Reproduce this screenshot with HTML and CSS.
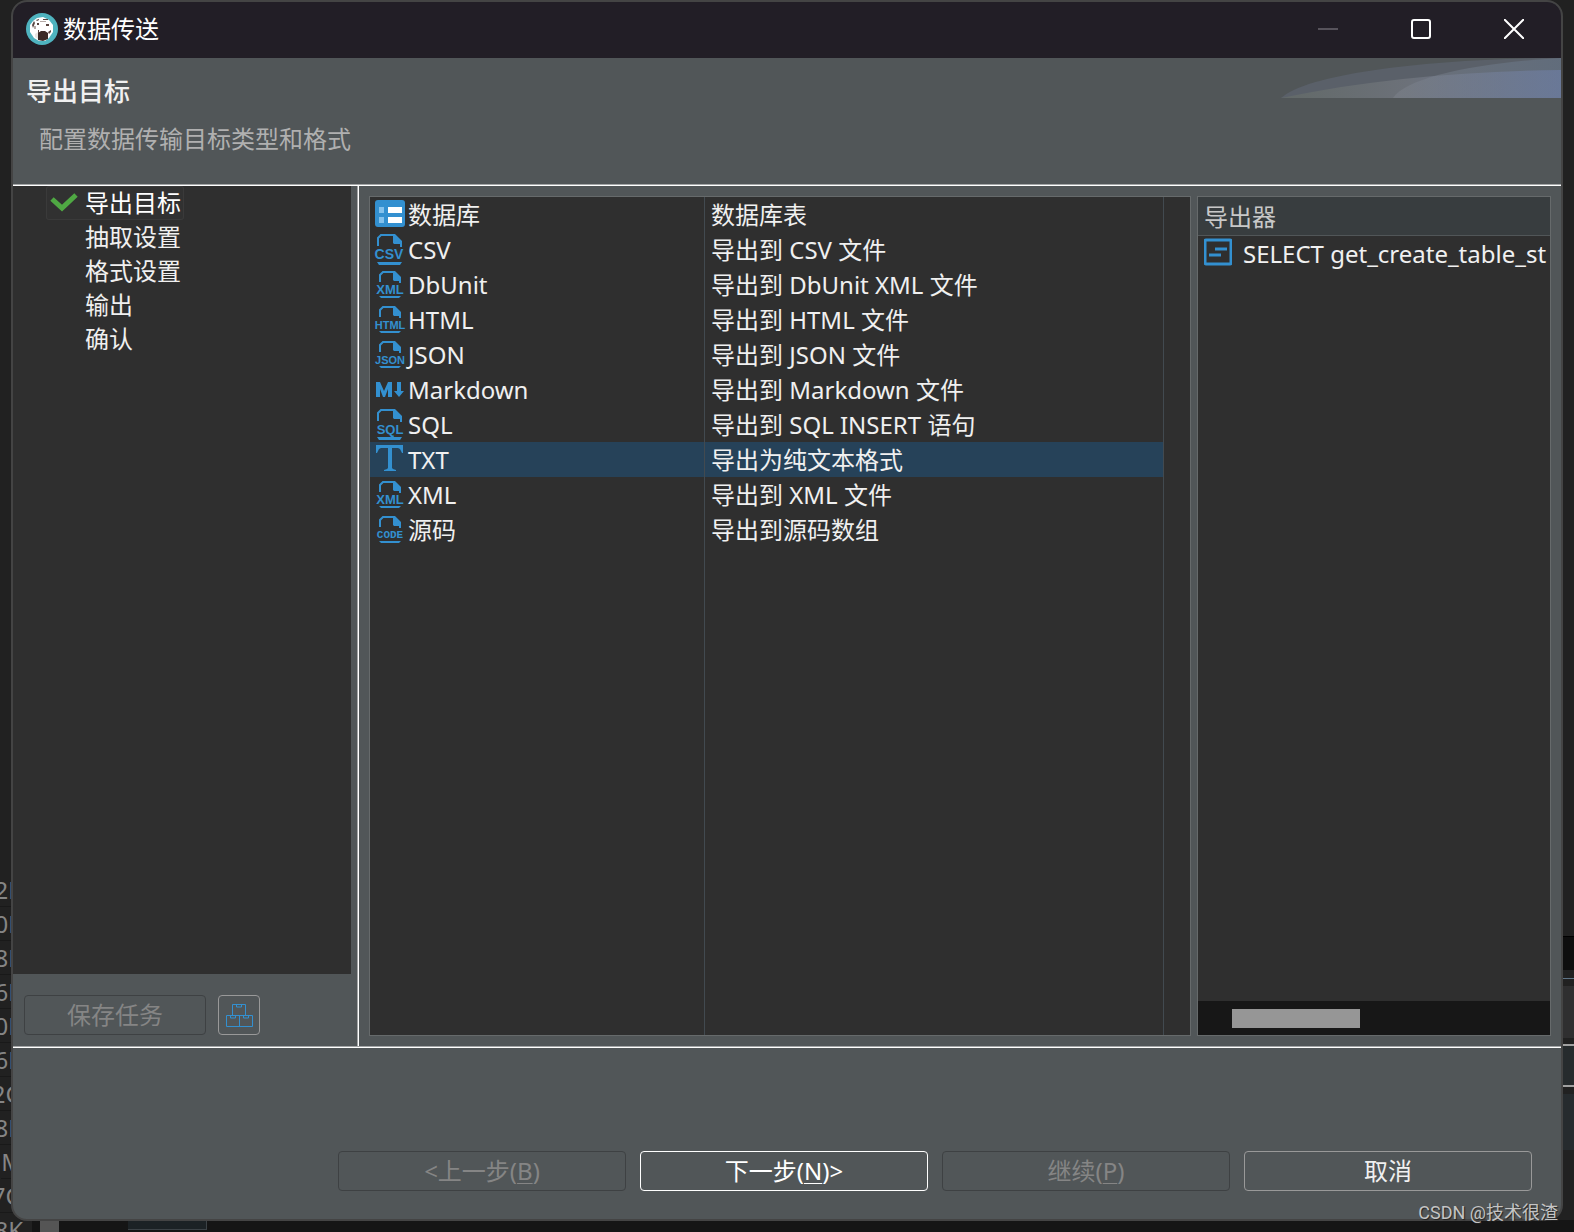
FILE: index.html
```html
<!DOCTYPE html>
<html lang="zh-CN">
<head>
<meta charset="utf-8">
<meta name="viewport" content="width=device-width, initial-scale=1">
<title>数据传送</title>
<link rel="stylesheet" href="styles.css">
</head>
<body>
<div class="backdrop" aria-hidden="true">
  <div class="backdrop-sizes">
    <span>2K</span><span>0K</span><span>8K</span><span>6K</span><span>0K</span><span>6K</span><span>2G</span><span>8K</span><span>M</span><span>7G</span><span>8K</span>
  </div>
  <div class="backdrop-side">
    <i class="side-dark"></i><i class="side-blue"></i><i class="side-tab"></i><i class="side-field"></i><i class="side-block"></i>
  </div>
  <div class="backdrop-bottom"><i class="bottom-thumb"></i><i class="bottom-cell"></i></div>
</div>

<svg class="defs" aria-hidden="true">
  <symbol id="doc" viewBox="0 0 31 35">
    <path d="M5 15V8L8 5H20M25 11V16" fill="none" stroke="#3390d0" stroke-width="2"/>
    <path d="M18 4h2l6 6v4h-7l-1-1z" fill="#3390d0"/>
    <path d="M4 29h22l-2 2H6z" fill="#3390d0"/>
  </symbol>
  <symbol id="doc-large" viewBox="0 0 31 35">
    <path d="M3 14V6L6 3H20M26 10V15" fill="none" stroke="#3390d0" stroke-width="2"/>
    <path d="M18 2h2l7 7v3h-8l-1-1z" fill="#3390d0"/>
    <path d="M2 30h25l-2 3H4z" fill="#3390d0"/>
  </symbol>
</svg>

<main class="window">
  <header class="titlebar">
    <svg class="logo" viewBox="0 0 32 32">
      <circle cx="16" cy="16" r="16" fill="#4fb3bf"/>
      <path d="M7 8l4-3 6-1 6 3 4 5v7l-4 6-4 3h-6l-5-3-4-6V12z" fill="#fff"/>
      <path d="M12 20l3-2h4l3 2v6l-5 2-5-1z" fill="#3b2a27"/>
      <path d="M6 12l2-4 1 2-2 5zM10 7l3-1v1l-2 1zM17 6h5v1h-5zM11 10h2v2h-2zM20 11h3v2h-3zM22 19l3-2v2l-2 2zM12 17h1v3h-1z" fill="#57433f"/>
      <path d="M9 21l3-2v7l-3-2z" fill="#e8e4e2"/>
      <path d="M8 13h2v3H8zM14 8h6v1h-6z" fill="#b5aaa6"/>
    </svg>
    <span class="window-title">数据传送</span>
    <div class="window-controls">
      <button type="button" disabled aria-label="最小化"><svg viewBox="0 0 20 20"><path d="M0 10h20" stroke="#57535b" stroke-width="2"/></svg></button>
      <button type="button" aria-label="最大化"><svg viewBox="0 0 20 20"><rect x="1" y="1" width="18" height="18" rx="2" fill="none" stroke="#fff" stroke-width="2"/></svg></button>
      <button type="button" aria-label="关闭"><svg viewBox="0 0 20 20"><path d="M0 0l20 20M20 0L0 20" stroke="#fff" stroke-width="2"/></svg></button>
    </div>
  </header>

  <section class="banner">
    <div>
      <h1>导出目标</h1>
      <p>配置数据传输目标类型和格式</p>
    </div>
    <svg class="swoosh" viewBox="0 0 280 40">
      <defs>
        <linearGradient id="low" x1="0" x2="1"><stop offset="0" stop-color="#626968"/><stop offset=".45" stop-color="#6c7179"/><stop offset="1" stop-color="#69759b"/></linearGradient>
        <linearGradient id="high" x1="0" x2="1"><stop offset="0" stop-color="#80858e"/><stop offset="1" stop-color="#6a7c92"/></linearGradient>
      </defs>
      <path d="M0 40C28 14 160 0 280 0V40z" fill="#5a6069"/>
      <path d="M0 40C90 21 190 13 280 12V40z" fill="url(#low)"/>
      <path d="M112 40C125 19 200 4 280 0V40z" fill="url(#high)" opacity=".45"/>
    </svg>
  </section>

  <div class="content">
    <aside class="sidebar">
      <nav class="steps" aria-label="步骤">
        <a class="step current" href="#target"><svg viewBox="0 0 28 20"><path d="M2 6l10 9L26 2" fill="none" stroke="#4fa843" stroke-width="5"/></svg><span>导出目标</span></a>
        <a class="step" href="#extract"><span>抽取设置</span></a>
        <a class="step" href="#format"><span>格式设置</span></a>
        <a class="step" href="#output"><span>输出</span></a>
        <a class="step" href="#confirm"><span>确认</span></a>
      </nav>
      <div class="task-bar">
        <button class="btn save" type="button" disabled>保存任务</button>
        <button class="btn icon-btn" type="button" aria-label="任务">
          <svg viewBox="0 0 28 24"><path d="M7.500 12V1.500h13V12M1.500 12.500h26v11h-26zM14.500 12.500v11M11.500 2v2h5V2M5.500 13v2h5v-2M18.500 13v2h5v-2" fill="none" stroke="#3390d0" stroke-width="1"/></svg>
        </button>
      </div>
    </aside>

    <div class="panels">
      <div class="panel">
        <table class="targets">
          <colgroup><col class="col-name"><col class="col-desc"><col></colgroup>
          <tbody>
            <tr><td><div class="name"><svg viewBox="0 0 31 35"><rect x="0" y="3" width="30" height="27" rx="3" fill="#3390d0"/><path d="M4 10h5v6H4zM4 20h5v6H4z" fill="#85c2ec"/><path d="M13 10h14v6H13zM13 20h14v6H13z" fill="#fff"/></svg>数据库</div></td><td>数据库表</td><td></td></tr>
            <tr><td><div class="name"><svg viewBox="0 0 31 35"><use href="#doc-large"/><text x="14" y="27" font-size="14">CSV</text></svg>CSV</div></td><td>导出到 CSV 文件</td><td></td></tr>
            <tr><td><div class="name"><svg viewBox="0 0 31 35"><use href="#doc"/><text x="15" y="27" font-size="13">XML</text></svg>DbUnit</div></td><td>导出到 DbUnit XML 文件</td><td></td></tr>
            <tr><td><div class="name"><svg viewBox="0 0 31 35"><use href="#doc"/><text x="15" y="27" font-size="11">HTML</text></svg>HTML</div></td><td>导出到 HTML 文件</td><td></td></tr>
            <tr><td><div class="name"><svg viewBox="0 0 31 35"><use href="#doc"/><text x="15" y="27" font-size="11">JSON</text></svg>JSON</div></td><td>导出到 JSON 文件</td><td></td></tr>
            <tr><td><div class="name"><svg viewBox="0 0 31 35"><path d="M1 25V10h4l4 9 4-9h4v15h-4v-8l-3 8H8l-3-8v8zM22 10h4v9h3l-5 6-5-6h3z" fill="#3390d0"/></svg>Markdown</div></td><td>导出到 Markdown 文件</td><td></td></tr>
            <tr><td><div class="name"><svg viewBox="0 0 31 35"><use href="#doc-large"/><text x="15" y="27" font-size="13">SQL</text></svg>SQL</div></td><td>导出到 SQL INSERT 语句</td><td></td></tr>
            <tr class="selected"><td><div class="name"><svg viewBox="0 0 31 35"><path d="M1 3h27v8h-1l-2-4-2-1h-6v20l1 1 3 1v1H9v-1l3-1 1-1V6H6L4 7l-2 4H1z" fill="#3390d0"/></svg>TXT</div></td><td>导出为纯文本格式</td><td></td></tr>
            <tr><td><div class="name"><svg viewBox="0 0 31 35"><use href="#doc"/><text x="15" y="27" font-size="13">XML</text></svg>XML</div></td><td>导出到 XML 文件</td><td></td></tr>
            <tr><td><div class="name"><svg viewBox="0 0 31 35"><use href="#doc"/><text class="mono" x="15" y="26" font-size="11">CODE</text></svg>源码</div></td><td>导出到源码数组</td><td></td></tr>
            <tr class="filler"><td></td><td></td><td></td></tr>
          </tbody>
        </table>
      </div>

      <div class="panel exporters">
        <table class="objects">
          <thead><tr><th scope="col">导出器</th></tr></thead>
          <tbody><tr><td><div class="object"><svg viewBox="0 0 28 28"><rect x="1" y="2" width="26" height="24" rx="1" fill="none" stroke="#3390d0" stroke-width="3"/><path d="M11 11h12M5 17h12" stroke="#3390d0" stroke-width="3"/></svg>SELECT get_create_table_st</div></td></tr></tbody>
        </table>
        <div class="scrollbar"><div class="thumb"></div></div>
      </div>
    </div>
  </div>

  <footer class="actions">
    <button class="btn" type="button" disabled>&lt;上一步(<u>B</u>)</button>
    <button class="btn primary" type="button">下一步(<u>N</u>)&gt;</button>
    <button class="btn" type="button" disabled>继续(<u>P</u>)</button>
    <button class="btn" type="button">取消</button>
  </footer>
</main>
<div class="watermark">CSDN @技术很渣</div>
</body>
</html>
```
FILE: styles.css
```css
* { box-sizing: border-box; }

body {
  margin: 0;
  height: 100vh;
  min-height: 720px;
  position: relative;
  overflow: hidden;
  background: #212121;
  color: #f0f0f0;
  font: 24px/34px "Noto Sans", "Noto Sans CJK SC", sans-serif;
}

button { font: inherit; color: inherit; }
svg { display: block; flex: none; }
.defs { position: absolute; width: 0; height: 0; }

/* Application behind the dialog */
.backdrop { position: absolute; inset: 0; overflow: hidden; }

.backdrop-sizes {
  position: absolute;
  left: 0;
  bottom: -15px;
  width: 23px;
  display: flex;
  flex-direction: column;
  align-items: flex-end;
  color: #858585;
}
.backdrop-sizes span { line-height: 33px; border-bottom: 1px solid #191919; }

.backdrop-side {
  position: absolute;
  right: 0;
  bottom: 82px;
  width: 14px;
  display: flex;
  flex-direction: column;
}
.side-dark { height: 34px; background: #0e0e0e; border-top: 1px solid #000; }
.side-blue { height: 1px; margin: 8px 0 7px; background: #5f7486; }
.side-tab { height: 52px; margin-bottom: 6px; background: #2f2f30; }
.side-field { height: 43px; margin-bottom: 7px; background: #262b2d; border: solid #a0a0a0; border-width: 2px 0; }
.side-block { height: 56px; background: #262b2e; }

.backdrop-bottom {
  position: absolute;
  left: 32px;
  right: 0;
  bottom: 0;
  height: 12px;
  display: flex;
  background: #151515;
}
.bottom-thumb { width: 19px; margin-left: 8px; background: #555; }
.bottom-cell { width: 79px; height: 10px; margin-left: 69px; background: #1c2225; border: solid #3c4246; border-width: 0 1px 1px 0; }

/* Dialog */
.window {
  position: relative;
  display: flex;
  flex-direction: column;
  height: calc(100% - 11px);
  margin: 0 11px;
  border: 2px solid #444;
  border-radius: 16px;
  overflow: hidden;
  background: #515658;
}

.titlebar {
  display: flex;
  align-items: center;
  height: 56px;
  flex: none;
  padding: 0 1px 2px 13px;
  background: #221e26;
}
.logo { width: 32px; height: 32px; }
.window-title { margin-left: 5px; color: #fff; }
.window-controls { display: flex; margin-left: auto; }
.window-controls button {
  display: grid;
  place-items: center;
  width: 93px;
  height: 54px;
  padding: 0;
  border: 0;
  background: none;
}
.window-controls svg { width: 20px; height: 20px; }

.banner {
  display: flex;
  justify-content: space-between;
  flex: none;
  height: 128px;
  border-bottom: 1px solid #fff;
  box-shadow: inset 0 -1px #a3a5a6;
}
.banner h1 { margin: 16px 0 0 13px; font-size: 26px; font-weight: 500; line-height: 34px; }
.banner p { margin: 14px 0 0 26px; color: #b0b0b0; }
.swoosh { width: 280px; height: 40px; }

.content { display: flex; flex: 1; min-height: 0; }

.sidebar {
  display: flex;
  flex-direction: column;
  flex: none;
  width: 346px;
  border-right: 1px solid #fff;
  box-shadow: inset -1px 0 #a3a5a6;
}
.steps {
  display: flex;
  flex-direction: column;
  align-items: flex-start;
  flex: 1;
  margin-right: 7px;
  padding-left: 33px;
  background: #2f2f2f;
}
.step {
  display: flex;
  align-items: center;
  height: 34px;
  padding: 0 3px 0 39px;
  color: inherit;
  text-decoration: none;
}
.step.current { padding-left: 4px; box-shadow: inset 0 0 0 1px #3a3a3a; border-radius: 3px; color: #fff; background: #313131; }
.step svg { width: 28px; height: 20px; margin-right: 7px; }

.task-bar { display: flex; gap: 12px; padding: 21px 11px 12px; }

.btn {
  height: 40px;
  padding: 0;
  border: 1px solid #999;
  border-radius: 4px;
  background: #515658;
  line-height: 34px;
}
.btn:disabled { border-color: #3e4143; color: #858585; }
.btn.primary { border-color: #fff; color: #fff; }
.btn u { text-decoration-thickness: 1px; text-underline-offset: 3px; }
.save { width: 182px; }
.icon-btn { display: grid; place-items: center; width: 42px; }
.icon-btn svg { width: 28px; height: 24px; }

.panels {
  display: grid;
  grid-template-columns: minmax(0, 822fr) minmax(0, 354fr);
  gap: 6px;
  flex: 1;
  min-width: 0;
  padding: 10px 10px 11px;
}
.panel { border: 1px solid #666a6b; background: #2f2f2f; min-height: 0; overflow: hidden; }

.targets { width: 100%; height: 100%; border-collapse: separate; border-spacing: 0; table-layout: fixed; }
.col-name { width: 334px; }
.col-desc { width: 56%; }
.targets td { height: 35px; padding: 0; line-height: 35px; white-space: nowrap; }
.targets td + td { padding-left: 6px; border-left: 1px solid #424a50; }
.targets .filler td { height: auto; }
.targets .selected td:not(:last-child) { background: #264259; }
.name { display: flex; align-items: center; height: 35px; padding-left: 5px; }
.name svg { width: 31px; height: 35px; margin-right: 2px; overflow: visible; }
.name text { fill: #3390d0; font-family: "Liberation Sans", sans-serif; font-weight: 700; text-anchor: middle; }
.name text.mono { font-family: "Liberation Mono", monospace; }

.exporters { display: flex; flex-direction: column; }
.objects { width: 100%; border-collapse: separate; border-spacing: 0; table-layout: fixed; }
.objects th {
  height: 39px;
  padding: 2px 6px 0;
  border-bottom: 1px solid #515658;
  background: #383d3f;
  color: #c8c8c8;
  font-weight: 400;
  text-align: left;
}
.objects td { padding: 0; }
.object { display: flex; align-items: center; height: 36px; padding-left: 6px; overflow: hidden; white-space: nowrap; }
.object svg { width: 28px; height: 28px; margin: 0 11px 4px 0; }
.scrollbar { display: flex; align-items: center; height: 34px; margin-top: auto; padding: 0 34px; background: #171717; }
.thumb { width: 45%; height: 19px; background: #969696; }

.actions {
  display: flex;
  justify-content: flex-end;
  gap: 14px;
  flex: none;
  padding: 103px 29px 28px;
  border-top: 1px solid #fff;
  box-shadow: 0 -1px #a3a5a6;
}
.actions .btn { width: 288px; }

.watermark {
  position: absolute;
  right: 16px;
  bottom: 6px;
  color: #c4c4c4;
  font: 18px/26px Roboto, "Noto Sans CJK SC", sans-serif;
  text-shadow: 1px 1px 1px #222;
}
```
